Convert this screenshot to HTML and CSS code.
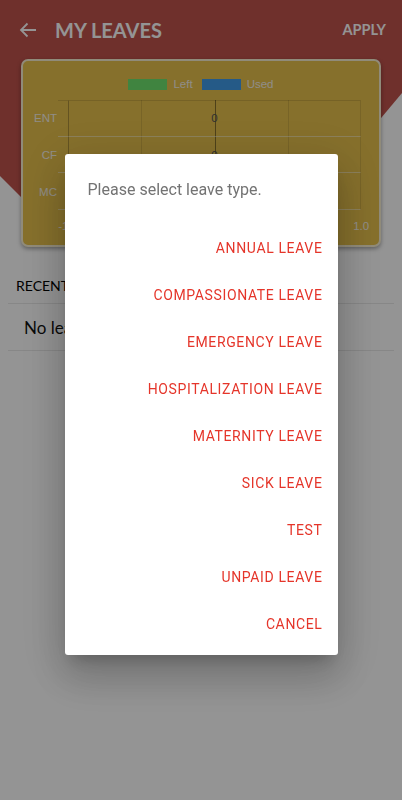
FILE: index.html
```html
<!DOCTYPE html>
<html lang="en">
<head>
    <meta charset="UTF-8">
    <meta name="viewport" content="width=device-width, initial-scale=1.0">
    <title>My Leaves</title>
    <link rel="stylesheet" href="styles.css">
</head>
<body>

<div class="page">
    <div class="bg-shape"></div>

    <div class="topbar">
        <svg class="back" width="24" height="24" viewBox="0 0 24 24">
            <path d="M20 12H5.5M11.5 5.5L5 12l6.5 6.5" fill="none" stroke="#fff" stroke-width="1.8"/>
        </svg>
        <h1 class="title">MY LEAVES</h1>
        <span class="apply">APPLY</span>
    </div>

    <div class="chart-card">
        <div class="legend">
            <span class="swatch left"></span><span>Left</span>
            <span class="swatch used"></span><span>Used</span>
        </div>
        <div class="plot">
            <div class="row first">
                <span class="cat">ENT</span><span class="tick"></span>
                <div class="cells"><span class="val">0</span></div>
            </div>
            <div class="row">
                <span class="cat">CF</span><span class="tick"></span>
                <div class="cells"><span class="val">0</span></div>
            </div>
            <div class="row">
                <span class="cat">MC</span><span class="tick"></span>
                <div class="cells"></div>
            </div>
            <div class="axis">
                <span>-1.0</span><span>-0.5</span><span>0.0</span><span>0.5</span><span>1.0</span>
            </div>
        </div>
    </div>

    <div class="recent">
        <div class="recent-head">RECENT LEAVES</div>
        <ul class="leave-list">
            <li>No leave record found.</li>
        </ul>
    </div>
</div>

<div class="overlay">
    <div class="dialog">
        <p class="dialog-title">Please select leave type.</p>
        <div class="options">
            <button>Annual Leave</button>
            <button>Compassionate Leave</button>
            <button>Emergency Leave</button>
            <button>Hospitalization Leave</button>
            <button>Maternity Leave</button>
            <button>Sick Leave</button>
            <button>Test</button>
            <button>Unpaid Leave</button>
            <button>Cancel</button>
        </div>
    </div>
</div>

</body>
</html>
```

FILE: styles.css
```css
body {
    margin: 0;
    font-family: Lato, "Open Sans", sans-serif;
    background-color: #fff;
}
.page {
    position: relative;
    height: 800px;
    overflow: hidden;
    background-color: #fff;
}
.bg-shape {
    position: absolute;
    top: 0;
    left: 0;
    width: 100%;
    height: 360px;
    background-color: #bf534c;
    clip-path: polygon(0 0, 100% 0, 100% 93px, 181px 357px, 0 176px);
}
.topbar {
    position: relative;
    display: flex;
    align-items: center;
    height: 59px;
    padding: 0 16px;
    color: #fff;
}
.back {
    display: block;
    margin-right: 15px;
}
.title {
    flex: 1;
    margin: 0;
    font-size: 20px;
    font-weight: 700;
}
.apply {
    font-size: 14.5px;
    font-weight: 700;
}
.chart-card {
    position: relative;
    height: 184px;
    margin: 0 21px;
    border: 2px solid rgba(255, 255, 255, 0.75);
    border-radius: 7px;
    background-color: #e7c14c;
    box-shadow: 0 2px 4px rgba(0, 0, 0, 0.35);
    font-family: "Liberation Sans", Arial, sans-serif;
    font-size: 11.5px;
    color: #f7f3ea;
}
.legend {
    display: flex;
    justify-content: center;
    align-items: center;
    height: 12px;
    margin-top: 17px;
}
.swatch {
    display: inline-block;
    width: 39px;
    height: 11px;
    margin-right: 6px;
}
.swatch.left {
    background-color: #6fe36f;
}
.swatch.used {
    background-color: #409be8;
    margin-left: 9px;
}
.plot {
    margin-top: 10px;
}
.row {
    display: grid;
    grid-template-columns: 35px 10px 293px;
    height: 36.7px;
}
.cat {
    align-self: center;
    text-align: right;
    padding-right: 1px;
}
.tick, .cells {
    border-bottom: 1px solid rgba(255, 255, 255, 0.45);
}
.row.first .tick, .row.first .cells {
    border-top: 1px solid rgba(0, 0, 0, 0.12);
}
.cells {
    display: flex;
    align-items: center;
    justify-content: center;
    border-left: 1px solid rgba(0, 0, 0, 0.25);
    border-right: 1px solid rgba(0, 0, 0, 0.1);
    background-image:
        linear-gradient(to right, transparent 146px, rgba(0, 0, 0, 0.35) 146px, rgba(0, 0, 0, 0.35) 147px, transparent 147px),
        repeating-linear-gradient(to right, transparent 0, transparent 72.25px, rgba(0, 0, 0, 0.1) 72.25px, rgba(0, 0, 0, 0.1) 73.25px);
    color: #555;
}
.axis {
    display: grid;
    grid-template-columns: repeat(5, 73.25px);
    margin-left: 8.5px;
    padding-top: 10px;
    text-align: center;
}
.recent {
    position: relative;
    margin-top: 20px;
}
.recent-head {
    padding: 10px 16px 9px;
    font-size: 14px;
    color: #000;
}
.leave-list {
    list-style: none;
    margin: 0 8px;
    padding: 0;
    border-top: 1px solid #e8e8e8;
}
.leave-list li {
    padding: 13px 16px 12px;
    font-size: 17px;
    color: #111;
    border-bottom: 1px solid #e8e8e8;
}
.overlay {
    position: fixed;
    inset: 0;
    display: flex;
    justify-content: center;
    align-items: flex-start;
    padding-top: 154px;
    background-color: rgba(0, 0, 0, 0.42);
}
.dialog {
    width: 273px;
    height: 501px;
    box-sizing: border-box;
    padding: 26px 15px 8px 23px;
    border-radius: 3px;
    background-color: #fff;
    box-shadow: 0 11px 15px -7px rgba(0, 0, 0, 0.2), 0 24px 38px 3px rgba(0, 0, 0, 0.14), 0 9px 46px 8px rgba(0, 0, 0, 0.12);
    font-family: Roboto, "Liberation Sans", sans-serif;
}
.dialog-title {
    margin: 0 0 24px;
    font-size: 16px;
    line-height: 20px;
    color: #737373;
}
.options {
    display: flex;
    flex-direction: column;
    align-items: flex-end;
}
.options button {
    height: 47px;
    padding: 0;
    border: none;
    background: none;
    font-family: Roboto, "Liberation Sans", sans-serif;
    font-size: 14px;
    letter-spacing: 0.63px;
    text-transform: uppercase;
    color: #e5352a;
    cursor: pointer;
}
```
